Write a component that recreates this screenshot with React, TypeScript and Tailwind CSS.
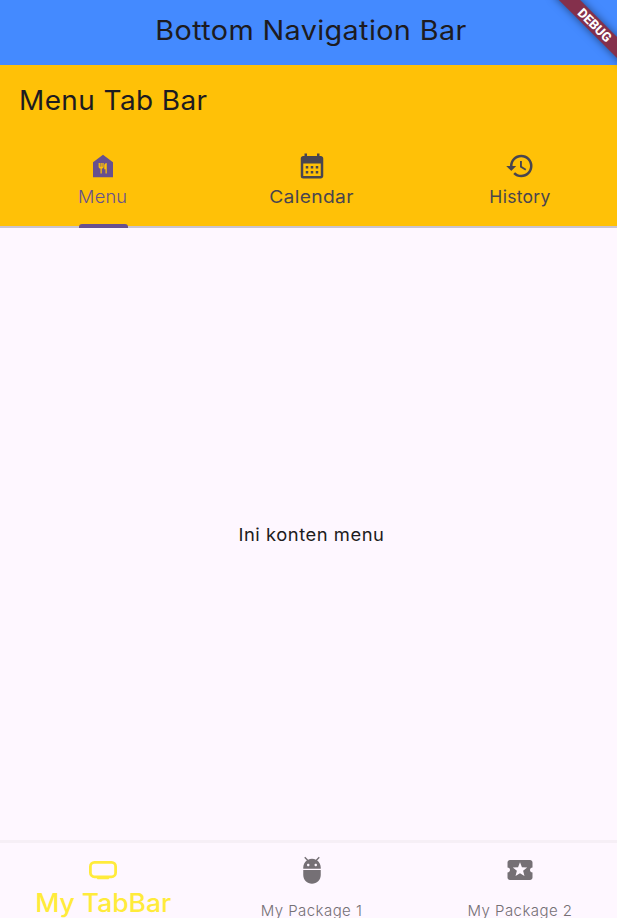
import React from "react";
import { MdFoodBank, MdCalendarMonth, MdHistory, MdAdb, MdLocalActivity } from "react-icons/md";

export default function App() {
  return (
    <div className="relative flex h-[918px] w-[617px] flex-col overflow-hidden bg-[#fef7ff] font-['Inter',sans-serif] text-[#1d1b20]">
      <header className="flex h-[65px] shrink-0 justify-center bg-[#448aff] pl-[6px]">
        <h1 className="mt-[13px] scale-x-[1.066] whitespace-nowrap text-[27px] font-normal leading-[36px] tracking-[0.35px]">Bottom Navigation Bar</h1>
      </header>
      <section className="h-[161px] shrink-0 bg-[#ffc107] pt-[18px]">
        <h2 className="ml-[19px] w-fit origin-left scale-x-[1.035] whitespace-nowrap text-[27px] font-normal leading-[36px] tracking-[0.4px]">Menu Tab Bar</h2>
        <nav className="mt-[32px] grid h-[77px] grid-cols-[206px_211px_206px] text-[#49454f]">
          <button className="flex flex-col items-center text-[#67508f]">
            <MdFoodBank size={30} />
            <span className="mt-[4px] scale-x-[1.04] text-[17.5px] font-[350] leading-[24px] tracking-[0.2px]">Menu</span>
            <i className="z-10 mt-[15px] h-[4px] w-[49px] shrink-0 rounded-t-[3px] bg-[#67508f]" />
          </button>
          <button className="flex flex-col items-center">
            <MdCalendarMonth size={30} />
            <span className="mt-[4px] scale-x-[1.1] text-[17.5px] font-[380] leading-[24px] tracking-[0.3px]">Calendar</span>
          </button>
          <button className="flex flex-col items-center">
            <MdHistory size={30} />
            <span className="mt-[4px] text-[17.5px] font-[380] leading-[24px] tracking-[0.3px]">History</span>
          </button>
        </nav>
      </section>
      <div className="h-[2px] shrink-0 bg-[#cac4d0]" />
      <main className="flex flex-1 items-center justify-center pl-[6px] pt-[2px]">
        <p className="scale-x-[1.05] text-[17.5px] font-[380] leading-[24px] tracking-[0.5px]">Ini konten menu</p>
      </main>
      <footer className="grid h-[78px] shrink-0 grid-cols-[206px_211px_206px] border-t-[3px] border-[#f6eff6] text-[#757075]">
        <button className="flex flex-col items-center pt-[12px] text-[#ffeb3b]">
          <svg width="30" height="30" viewBox="0 0 30 30" fill="none">
            <rect x="2.4" y="7.4" width="25.2" height="14.4" rx="4" stroke="currentColor" strokeWidth="2.8" />
            <path d="M8 22h14l-1.5 2.2h-11z" fill="currentColor" />
          </svg>
          <span className="mt-[2px] scale-x-[1.06] whitespace-nowrap text-[25px] font-[460] leading-[32px]">My TabBar</span>
        </button>
        <button className="flex flex-col items-center pt-[12px]">
          <MdAdb size={30} />
          <span className="mt-[19px] whitespace-nowrap text-[15px] font-[350] leading-[14px] tracking-[0.45px]">My Package 1</span>
        </button>
        <button className="flex flex-col items-center pt-[12px]">
          <MdLocalActivity size={30} />
          <span className="mt-[19px] whitespace-nowrap text-[15px] font-[350] leading-[14px] tracking-[0.45px]">My Package 2</span>
        </button>
      </footer>
      <div className="absolute left-[544px] top-[17px] flex h-[15px] w-[100px] rotate-45 items-center justify-center bg-[#84304c] font-['Roboto',sans-serif] text-[13px] font-extrabold leading-none text-white shadow-[0_0_8px_rgba(0,0,0,0.5)]">
        <span className="translate-x-[1px]">DEBUG</span>
      </div>
    </div>
  );
}
